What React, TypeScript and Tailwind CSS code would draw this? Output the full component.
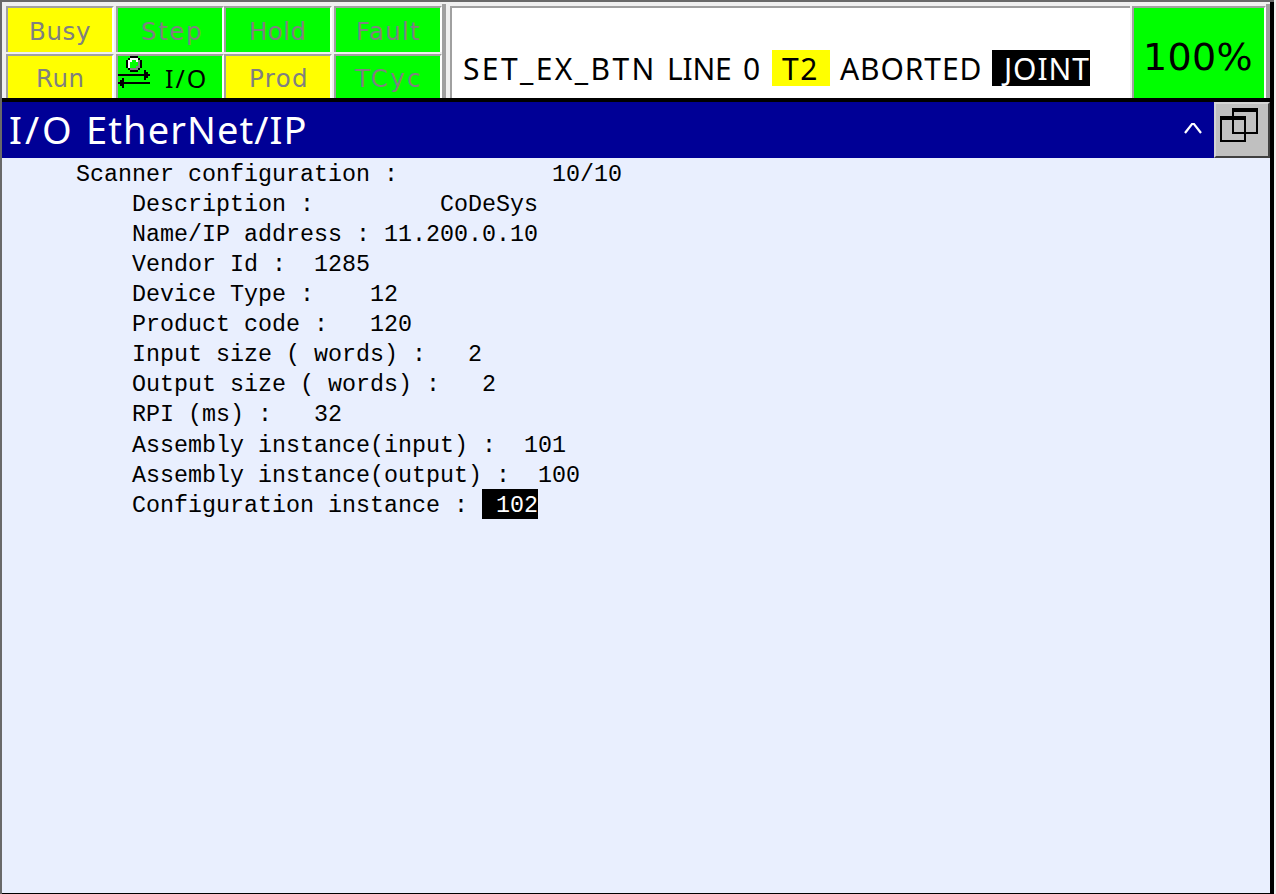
import React from 'react';

type Cell = { label: string; on: boolean; gap: string; text: string; icon?: boolean };

const topCells: Cell[] = [
  { label: 'Busy', on: true, gap: 'mr-[2px]', text: 'pl-[21px] tracking-[0.6px]' },
  { label: 'Step', on: false, gap: 'mr-0', text: 'pl-[23px] tracking-[1.6px]' },
  { label: 'Hold', on: false, gap: 'mr-[2px]', text: 'pl-[23px] tracking-[0.4px]' },
  { label: 'Fault', on: false, gap: 'mr-0', text: 'pl-[20px] tracking-[1.2px]' },
];

const bottomCells: Cell[] = [
  { label: 'Run', on: true, gap: 'mr-[2px]', text: 'pl-[28px] tracking-[0.5px]' },
  { label: 'I/O', on: false, gap: 'mr-0', text: 'pl-[15px] tracking-[2px]', icon: true },
  { label: 'Prod', on: true, gap: 'mr-[2px]', text: 'pl-[23px] tracking-[1.4px]' },
  { label: 'TCyc', on: false, gap: 'mr-0', text: 'pl-[19px] tracking-[2.3px]' },
];

const rows = [
  'Scanner configuration :           10/10',
  '    Description :         CoDeSys',
  '    Name/IP address : 11.200.0.10',
  '    Vendor Id :  1285',
  '    Device Type :    12',
  '    Product code :   120',
  '    Input size ( words) :   2',
  '    Output size ( words) :   2',
  '    RPI (ms) :   32',
];

const lastRows = [
  '    Assembly instance(input) :  101',
  '    Assembly instance(output) :  100',
];

function IoIcon() {
  return (
    <svg className="shrink-0" width="32" height="42" viewBox="0 0 32 42" shapeRendering="crispEdges">
      <path d="M12 0h8v2h2v2h2v8h-2v2h-2v2h-8v-2h-2v-2H8V4h2V2h2z" fill="#000" />
      <path d="M12 2h8v2h2v8h-2v2h-8v-2h-2V4h2z" fill="#fff" />
      <path d="M20 4h2v8h-2v2h-8v-2h6v-2h2z" fill="#808080" />
      <path d="M14 4h4v2h2v4h-2v2h-6V6h2z" fill="#0f0" />
      <path d="M0 18h26v-4h2v2h2v2h2v2h-2v2h-2v2h-2v-4H0z" fill="#000" />
      <path d="M32 26H6v-4H4v2H2v2H0v2h2v2h2v2h2v-4h26z" fill="#000" />
    </svg>
  );
}

function StatusCell({ cell, height }: { cell: Cell; height: string }) {
  return (
    <div
      className={`flex w-[108px] shrink-0 items-center border-l-2 border-t-2 border-r-2 border-l-[#a0a0a0] border-t-[#a0a0a0] border-r-white ${cell.gap} ${height} ${cell.on ? 'bg-[#ffff00]' : 'bg-[#00ff00]'}`}
    >
      {cell.icon && <IoIcon />}
      <span
        className={`whitespace-pre leading-[30px] ${cell.text} ${cell.icon ? "pt-px font-['Noto_Sans'] text-[25px] text-black" : "pt-[3px] font-['DejaVu_Sans'] text-[24.5px] text-[#808080]"}`}
      >
        {cell.label}
      </span>
    </div>
  );
}

function WindowsIcon() {
  return (
    <svg width="52" height="52" viewBox="0 0 52 52" shapeRendering="crispEdges" fill="#000">
      <path fillRule="evenodd" d="M16 4h26v26H16zM18 8v20h22V8z" />
      <path fillRule="evenodd" d="M4 12h26v26H4zM6 16v20h22V16z" />
    </svg>
  );
}

export default function App() {
  return (
    <div className="flex h-[894px] w-[1276px] overflow-hidden bg-[#f0f0f0]">
      <div className="flex w-[1274px] shrink-0 flex-col border-l-2 border-t-2 border-[#696969]">
        <div className="flex min-h-0 grow">
          <div className="flex w-[1268px] shrink-0 flex-col">
            <header className="flex h-24 shrink-0">
              <div className="flex w-[438px] flex-col gap-[2px] pl-1 pt-1">
                <div className="flex">
                  {topCells.map((c) => (
                    <StatusCell key={c.label} cell={c} height="h-[46px]" />
                  ))}
                </div>
                <div className="flex">
                  {bottomCells.map((c) => (
                    <StatusCell key={c.label} cell={c} height="h-11" />
                  ))}
                </div>
              </div>
              <div className="ml-[2px] mr-1 mt-[2px] w-1 bg-[#a0a0a0]" />
              <div className="mt-1 flex w-[680px] items-start whitespace-pre border-l-2 border-t-2 border-[#a0a0a0] bg-white pl-[11px] pt-[42px] font-['Noto_Sans'] text-[30px] leading-[37px] text-black">
                <span className="w-[204px] tracking-[2.4px]">SET_EX_BTN</span>
                <span className="w-[76px] tracking-[-0.2px]">LINE</span>
                <span className="w-[29px]">0</span>
                <span className="h-9 w-[58px] bg-[#ffff00] pl-[10px] tracking-[1.5px]">T2</span>
                <span className="w-[162px] pl-[10px] tracking-[0.9px]">ABORTED</span>
                <span className="h-9 w-[98px] bg-black pl-[12px] tracking-[0.9px] text-white">JOINT</span>
              </div>
              <div className="ml-[2px] mt-1 flex w-[134px] items-center border-l-2 border-r-2 border-t-2 border-l-[#a0a0a0] border-r-white border-t-[#a0a0a0] bg-[#00ff00] pl-[9px] font-['DejaVu_Sans'] text-[38px] text-black">
                <span className="pt-[7px] leading-[44px] tracking-[0.3px]">100%</span>
              </div>
              <div className="mt-[2px] w-1 bg-[#a0a0a0]" />
            </header>
            <div className="h-1 shrink-0 bg-black" />
            <div className="flex h-14 shrink-0 items-start bg-[#000096] text-white">
              <h1 className="flex grow whitespace-pre pl-[7px] font-['Noto_Sans'] text-[38px] leading-[54px]">
                <span className="w-[77px] tracking-[3px]">I/O </span>
                <span className="tracking-[1.1px]">EtherNet/IP</span>
              </h1>
              <svg className="mr-3 mt-5" width="18" height="12" viewBox="0 0 18 12" fill="none" stroke="#fff" strokeWidth="2.2">
                <path d="M1 11 8 2h2l7 9" />
              </svg>
              <div className="h-14 w-14 border-2 border-b-[#404040] border-l-[#d4d4d4] border-r-[#404040] border-t-[#d4d4d4] bg-[#c0c0c0]">
                <WindowsIcon />
              </div>
            </div>
            <main className="flex grow flex-col whitespace-pre border-b border-black bg-[#e9effe] pl-[74px] pt-[2px] font-['Liberation_Mono'] text-[23.33px] leading-[30px] text-black">
              {rows.map((r) => (
                <div key={r} className="h-[30px]">{r}</div>
              ))}
              <div className="pt-px">
                {lastRows.map((r) => (
                  <div key={r} className="h-[30px]">{r}</div>
                ))}
                <div className="flex h-[30px]">
                  <span>{'    Configuration instance : '}</span>
                  <span className="-mt-[2px] h-[30px] w-14 bg-black pt-[2px] text-white"> 102</span>
                </div>
              </div>
            </main>
          </div>
          <div className="w-1 bg-black" />
        </div>
      </div>
    </div>
  );
}
